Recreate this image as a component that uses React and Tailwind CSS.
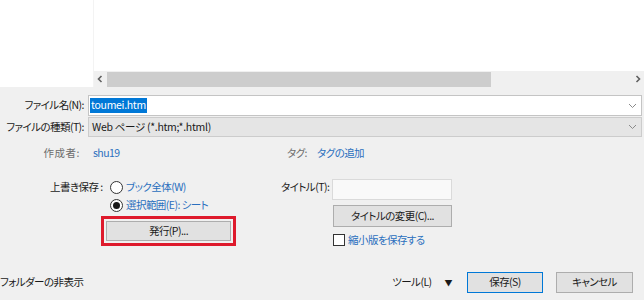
import React from "react";

const font = "font-['Noto_Sans_CJK_JP','Noto_Sans',sans-serif] [font-feature-settings:'palt']";

const Chevron = () => (
  <svg width="9" height="6" viewBox="0 0 9 6" className="shrink-0">
    <path d="M1 1l3.5 3.5L8 1" fill="none" stroke="#8a8a8a" strokeWidth="1" />
  </svg>
);

const Arrow = ({ right }) => (
  <svg width="12" height="16" viewBox="0 0 12 16" className="shrink-0">
    <path
      d={right ? "M4.5 5l3 3-3 3" : "M7.5 5l-3 3 3 3"}
      fill="none"
      stroke="#606060"
      strokeWidth="1.6"
    />
  </svg>
);

const Radio = ({ checked }) => (
  <span className="flex h-[13px] w-[13px] shrink-0 items-center justify-center rounded-full border border-[#333] bg-white">
    {checked && <span className="h-[7px] w-[7px] rounded-full bg-[#1a1a1a]" />}
  </span>
);

export default function App() {
  return (
    <div className={`h-[300px] w-[644px] overflow-hidden whitespace-nowrap bg-[#f0f0f0] text-[10.5px] leading-none tracking-[-0.55px] text-[#1a1a1a] ${font}`}>
      {/* file list area */}
      <div className="flex h-[87px]">
        <div className="w-[94px] bg-white border-r border-[#f3f3f3]" />
        <div className="flex flex-1 flex-col">
          <div className="flex-1 bg-white" />
          <div className="flex h-[16px] items-center bg-[#f0f0f0]">
            <Arrow />
            <div className="ml-[1px] h-[15px] w-[384px] bg-[#cdcdcd]" />
            <div className="flex-1" />
            <Arrow right />
          </div>
        </div>
      </div>

      {/* form */}
      <div className="pt-[8px]">
        <div className="flex h-[21px] items-center">
          <div className="w-[84px] text-right">ファイル名(N):</div>
          <div className="ml-[4px] mr-[2px] flex h-[21px] flex-1 items-center border border-[#c4c4c4] bg-white pl-[1px] pr-[4px]">
            <span className="bg-[#0078d7] px-[1px] py-[2px] tracking-[-0.3px] text-white">toumei.htm</span>
            <div className="flex-1" />
            <Chevron />
          </div>
        </div>
        <div className="mt-[1px] flex h-[20px] items-center">
          <div className="w-[84px] text-right">ファイルの種類(T):</div>
          <div className="ml-[4px] mr-[2px] flex h-[20px] flex-1 items-center border border-[#cccccc] bg-[#e5e5e5] pl-[3px] pr-[4px]">
            <span className="tracking-[-0.3px]">Web ページ (*.htm;*.html)</span>
            <div className="flex-1" />
            <Chevron />
          </div>
        </div>

        <div className="mt-[8px] flex h-[16px] items-center">
          <div className="w-[80px] text-right text-[#6d6d6d] tracking-[0.5px]">作成者:</div>
          <div className="ml-[13px] w-[194px] text-[#2a6fbe]">shu19</div>
          <div className="text-[#6d6d6d]">タグ:</div>
          <div className="ml-[10px] text-[#2a6fbe]">タグの追加</div>
        </div>

        <div className="mt-[18px] flex">
          {/* left column */}
          <div className="w-[281px]">
            <div className="flex h-[16px] items-center">
              <div className="ml-[50px] w-[60px]">上書き保存 :</div>
              <Radio />
              <span className="ml-[3px] text-[#2a6fbe]">ブック全体(W)</span>
            </div>
            <div className="mt-[2px] flex h-[16px] items-center pl-[110px]">
              <Radio checked />
              <span className="ml-[3px] text-[#2a6fbe]">選択範囲(E): シート</span>
            </div>
            <div className="ml-[101px] mt-[3px] w-[135px] border-[3px] border-[#de1a2c] p-[2px]">
              <div className="flex h-[20px] items-center justify-center border border-[#adadad] bg-[#e1e1e1]">
                発行(P)...
              </div>
            </div>
          </div>

          {/* right column */}
          <div>
            <div className="flex items-start">
              <div className="flex h-[16px] w-[51px] items-center">タイトル(T):</div>
              <div className="h-[21px] w-[120px] border border-[#dadada] bg-[#f9f9f9]" />
            </div>
            <div className="ml-[52px] mt-[5px] flex h-[22px] w-[119px] items-center justify-center border border-[#adadad] bg-[#e1e1e1]">
              タイトルの変更(C)...
            </div>
            <div className="ml-[52px] mt-[7px] flex items-center">
              <span className="h-[12px] w-[12px] border border-[#333] bg-white" />
              <span className="ml-[3px] text-[#2a6fbe]">縮小版を保存する</span>
            </div>
          </div>
        </div>

        {/* bottom bar */}
        <div className="mt-[26px] flex h-[21px] items-center">
          <div>フォルダーの非表示</div>
          <div className="flex-1" />
          <span>ツール(L)</span>
          <span className="ml-[13px] text-[8px]">▼</span>
          <div className="ml-[15px] flex h-[21px] w-[76px] items-center justify-center border border-[#0078d7] bg-[#e1e1e1]">
            保存(S)
          </div>
          <div className="ml-[13px] mr-[11px] flex h-[21px] w-[77px] items-center justify-center border border-[#adadad] bg-[#e1e1e1]">
            キャンセル
          </div>
        </div>
      </div>
    </div>
  );
}
